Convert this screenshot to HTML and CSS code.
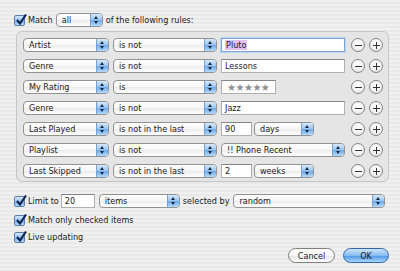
FILE: index.html
```html
<!DOCTYPE html>
<html lang="en">
<head>
  <meta charset="UTF-8">
  <title>Smart Playlist</title>
  <link rel="stylesheet" href="styles.css">
</head>
<body>
  <div class="dialog">

    <div class="line match">
      <span class="check"><svg viewBox="0 0 14 14"><path d="M3 7 L6 10.5 L12 1.5" /></svg></span>
      <span class="label">Match</span>
      <div class="popup w-all"><span class="value">all</span><span class="arrows"></span></div>
      <span class="label">of the following rules:</span>
    </div>

    <div class="rules">
      <div class="rule">
        <div class="popup w-field"><span class="value">Artist</span><span class="arrows"></span></div>
        <div class="popup w-op"><span class="value">is not</span><span class="arrows"></span></div>
        <div class="text w-long focus"><span class="sel">Pluto</span></div>
        <span class="round minus"></span><span class="round plus"></span>
      </div>
      <div class="rule">
        <div class="popup w-field"><span class="value">Genre</span><span class="arrows"></span></div>
        <div class="popup w-op"><span class="value">is not</span><span class="arrows"></span></div>
        <div class="text w-long">Lessons</div>
        <span class="round minus"></span><span class="round plus"></span>
      </div>
      <div class="rule">
        <div class="popup w-field"><span class="value">My Rating</span><span class="arrows"></span></div>
        <div class="popup w-op"><span class="value">is</span><span class="arrows"></span></div>
        <div class="text w-stars"><span class="stars">★★★★★</span></div>
        <span class="spring"></span>
        <span class="round minus"></span><span class="round plus"></span>
      </div>
      <div class="rule">
        <div class="popup w-field"><span class="value">Genre</span><span class="arrows"></span></div>
        <div class="popup w-op"><span class="value">is not</span><span class="arrows"></span></div>
        <div class="text w-long">Jazz</div>
        <span class="round minus"></span><span class="round plus"></span>
      </div>
      <div class="rule">
        <div class="popup w-field"><span class="value">Last Played</span><span class="arrows"></span></div>
        <div class="popup w-op"><span class="value">is not in the last</span><span class="arrows"></span></div>
        <div class="text w-num">90</div>
        <div class="popup w-unit"><span class="value">days</span><span class="arrows"></span></div>
        <span class="spring"></span>
        <span class="round minus"></span><span class="round plus"></span>
      </div>
      <div class="rule">
        <div class="popup w-field"><span class="value">Playlist</span><span class="arrows"></span></div>
        <div class="popup w-op"><span class="value">is not</span><span class="arrows"></span></div>
        <div class="popup w-long"><span class="value">!! Phone Recent</span><span class="arrows"></span></div>
        <span class="round minus"></span><span class="round plus"></span>
      </div>
      <div class="rule">
        <div class="popup w-field"><span class="value">Last Skipped</span><span class="arrows"></span></div>
        <div class="popup w-op"><span class="value">is not in the last</span><span class="arrows"></span></div>
        <div class="text w-num">2</div>
        <div class="popup w-unit"><span class="value">weeks</span><span class="arrows"></span></div>
        <span class="spring"></span>
        <span class="round minus"></span><span class="round plus"></span>
      </div>
    </div>

    <div class="line limit">
      <span class="check"><svg viewBox="0 0 14 14"><path d="M3 7 L6 10.5 L12 1.5" /></svg></span>
      <span class="label">Limit to</span>
      <div class="text w-limit">20</div>
      <div class="popup w-items"><span class="value">items</span><span class="arrows"></span></div>
      <span class="label">selected by</span>
      <div class="popup w-random"><span class="value">random</span><span class="arrows"></span></div>
    </div>

    <div class="line option">
      <span class="check"><svg viewBox="0 0 14 14"><path d="M3 7 L6 10.5 L12 1.5" /></svg></span>
      <span class="label">Match only checked items</span>
    </div>
    <div class="line option">
      <span class="check"><svg viewBox="0 0 14 14"><path d="M3 7 L6 10.5 L12 1.5" /></svg></span>
      <span class="label">Live updating</span>
    </div>

    <div class="buttons">
      <span class="button cancel">Cancel</span>
      <span class="button ok">OK</span>
    </div>

  </div>
</body>
</html>
```

FILE: styles.css
```css
/* aqua pinstripe window */
* { box-sizing:border-box }
body {
  margin:0;
  width:400px; height:271px; overflow:hidden;
  background:repeating-linear-gradient(#f0f0f0 0 2px, #e9e9e9 2px 4px);
  font-family:"DejaVu Sans Condensed", "Liberation Sans", sans-serif;
  font-size:9px;
  color:#222;
}
.dialog { padding:13px 11px 0 14px; }

/* generic rows */
.line { display:flex; align-items:center; height:14px; }
.label { white-space:nowrap; }

.match .label { margin-left:3px; }
.match .popup { margin-left:3px; }
.match .popup + .label { margin-left:3px; }

/* checkbox */
.check {
  position:relative;
  width:11px; height:11px; flex:none;
  border:1px solid #5a80ad; border-radius:2px;
  background:linear-gradient(#d6e8fb, #93c1f1 50%, #66a4e8 51%, #b6dafc);
}
.check svg {
  position:absolute; left:-1px; top:-3px;
  width:14px; height:14px;
  fill:none; stroke:#10264a; stroke-width:2.2;
}

/* aqua pop-up button */
.popup {
  display:flex; align-items:center;
  height:14px; flex:none;
  border:1px solid #929292; border-radius:4px;
  background:linear-gradient(#ffffff, #f6f6f6 50%, #ececec 51%, #ffffff);
  overflow:hidden;
}
.popup .value {
  flex:1; padding-left:5px;
  white-space:nowrap; overflow:hidden;
}
.popup .arrows {
  position:relative;
  width:12px; height:100%; flex:none;
  border-left:1px solid #7aa0cc;
  background:linear-gradient(#d6e9fc, #98c5f2 50%, #6aa8ea 51%, #b3dbfd);
}
.popup .arrows::before,
.popup .arrows::after {
  content:""; position:absolute; left:3px;
  border-left:2.5px solid transparent; border-right:2.5px solid transparent;
}
.popup .arrows::before { top:2px; border-bottom:3px solid #1b2a3c; }
.popup .arrows::after { bottom:2px; border-top:3px solid #1b2a3c; }

/* text field */
.text {
  display:flex; align-items:center;
  height:14px; flex:none;
  padding-left:3px;
  background:#fff;
  border:1px solid #b0b0b0; border-top-color:#858585;
  white-space:nowrap;
}
.text.focus {
  border-color:#7aa5d6;
  box-shadow:0 0 0 1px #bcd5f0;
}
.sel { background:#e4c0f4; padding:0 1px; }
.stars { color:#8e8e8e; font-family:"DejaVu Sans", sans-serif; font-size:10px; letter-spacing:-0.5px; padding-left:2px; }

/* rules box */
.rules {
  display:flex; flex-direction:column; gap:7px;
  margin:4px 0 0 2px;
  width:373px; height:151px;
  padding:6px 5px 0 6px;
  border:1px solid #c6c6c6; border-radius:6px;
  background:#e5e5e5;
}
.rule { display:flex; align-items:center; height:14px; }
.rule .w-op { margin-left:4px; }
.rule .w-op + * { margin-left:4px; }
.rule .w-unit { margin-left:2px; }
.spring { flex:1; }
.rule .minus { margin-left:auto; }
.rule .plus { margin-left:4px; }

.w-all { width:47px; }
.w-field { width:86px; }
.w-op { width:104px; }
.w-long { width:124px; }
.w-stars { width:55px; }
.w-num { width:31px; }
.w-unit { width:60px; }
.w-limit { width:34px; }
.w-items { width:81px; }
.w-random { width:152px; }

/* round minus / plus buttons */
.round {
  position:relative;
  width:14px; height:14px; flex:none;
  border:1px solid #858585; border-radius:50%;
  background:radial-gradient(circle at 50% 35%, #ffffff, #f3f3f3 55%, #d8d8d8);
}
.round::before {
  content:""; position:absolute;
  left:2.5px; top:5.5px; width:7px; height:1px;
  background:#333;
}
.round.plus::after {
  content:""; position:absolute;
  left:5.5px; top:2.5px; width:1px; height:7px;
  background:#333;
}

/* limit row */
.limit { margin-top:12px; }
.limit .label { margin-left:3px; }
.limit .text { margin-left:2px; }
.limit .w-items { margin-left:4px; }
.limit .w-items + .label { margin-left:3px; }
.limit .w-random { margin-left:4px; }

.option { height:12px; margin-top:6px; }
.option + .option { margin-top:5px; }
.option .label { margin-left:3px; }

/* push buttons */
.buttons {
  display:flex; justify-content:flex-end; gap:8px;
  margin-top:5px;
}
.button {
  display:flex; align-items:center; justify-content:center;
  height:15px;
  border-radius:8px;
  border:1px solid #808080;
}
.cancel {
  width:47px;
  background:linear-gradient(#ffffff, #f6f6f6 50%, #e6e6e6 51%, #fbfbfb);
}
.ok {
  width:46px;
  border-color:#3566a8;
  background:linear-gradient(#cde5fc, #86bbf0 50%, #4c95e6 51%, #a7d6fd);
}
```
